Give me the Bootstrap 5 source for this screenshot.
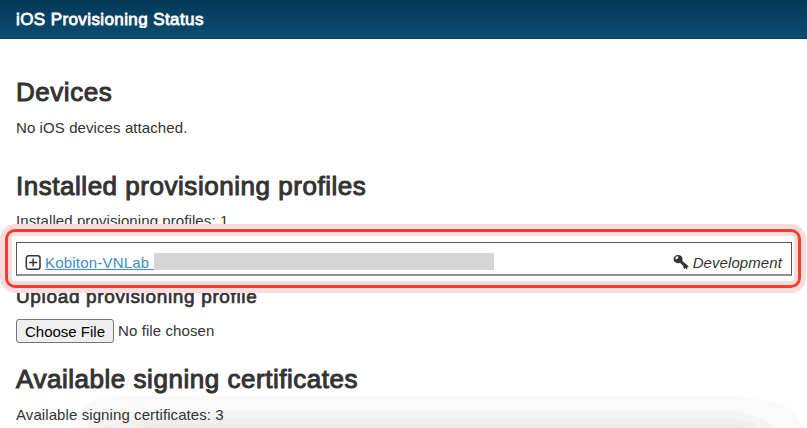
<!DOCTYPE html>
<html lang="en">
<head>
<meta charset="utf-8">
<meta name="viewport" content="width=device-width, initial-scale=1">
<title>iOS Provisioning Status</title>
<link href="https://cdn.jsdelivr.net/npm/bootstrap@5.3.0/dist/css/bootstrap.min.css" rel="stylesheet">
<style>
body{font-family:"Liberation Sans",Arial,sans-serif;font-size:15px;line-height:20px;letter-spacing:.09px;color:#333;background:#fff;height:428px}
.topbar{height:39px;padding-top:10px;background:linear-gradient(#053857,#0a4d72);border-bottom:1px solid #073753}
.topbar h1{font-size:17px;line-height:20px;height:18px;overflow:hidden;letter-spacing:.4px;color:#fff;-webkit-text-stroke:.8px #fff}
.section-title{font-size:26px;line-height:30px;height:30px;letter-spacing:.53px;font-weight:400;-webkit-text-stroke:1px #333;white-space:nowrap}
.sub-title{margin-top:-3px;font-size:19px;line-height:24px;letter-spacing:.65px;font-weight:400;-webkit-text-stroke:.7px #333}
.page{padding:38px 16px 0}
.devices-text{margin-top:11px}
.installed{margin-top:33px}
.count-text{margin-top:10px}
.highlight{z-index:2;height:59px;margin:-2px -10px 0 -11px;padding:10px 6px 0 8px;background:#fff;border:3px solid #f33d33;border-radius:10px;box-shadow:0 0 0 5px #fadcdc,inset 0 0 0 4px #fadcdc}
.profile{height:34px;padding:0 9px 0 8px;border:1px solid #555;border-bottom:2px solid #909090;background:#fff}
.plus{margin-top:12px}
.profile-link{margin:10px 0 0 4px;letter-spacing:.2px;color:#428bca}
.profile-link:hover{color:#2a6496}
.redacted{width:340px;height:17px;margin-top:10px;background:#d5d5d5}
.key{margin-top:11px}
.kind{margin:10px 0 0 4px}
.upload{margin-top:10px}
.choose{height:24px;padding:0 8px;border:1px solid #767676;border-radius:3px;background:#efefef;color:#000;font-size:15px;line-height:21px}
.file-status{margin:2px 0 0 4px}
.certs{margin-top:21px}
.cert-text{margin-top:11px}
.shade{left:70px;top:396px;z-index:-1}
</style>
</head>
<body class="overflow-hidden position-relative">
<header class="topbar d-flex align-items-start px-3">
<h1 class="mb-0 fw-normal">iOS Provisioning Status</h1>
</header>
<main class="page">
<section>
<h2 class="section-title mb-0">Devices</h2>
<p class="devices-text mb-0">No iOS devices attached.</p>
</section>
<section class="installed">
<h2 class="section-title mb-0">Installed provisioning profiles</h2>
<p class="count-text mb-0">Installed provisioning profiles: 1</p>
<div class="highlight position-relative">
<div class="profile d-flex align-items-start">
<svg class="plus flex-shrink-0" width="16" height="15" viewBox="0 0 16 15" fill="none" stroke="#333"><rect x="1.300" y=".8" width="13.700" height="13.400" rx="2.300" stroke-width="1.500"/><path d="M8.150 3.500v8M4.150 7.500h8" stroke-width="1.400"/></svg>
<a href="#" class="profile-link">Kobiton-VNLab&nbsp;</a>
<div class="redacted"></div>
<div class="ms-auto d-flex align-items-start">
<svg class="key" width="16" height="16" viewBox="0 0 16 16"><path fill="#333" fill-rule="evenodd" d="M5 1C2.600 1 .6 2.800.6 5.100S2.500 9.300 4.900 9.300c.8 0 1.500-.2 2.100-.6L10.500 12.300 10.300 13.700 11.500 14.900 12.400 13.900 12.900 14.300 13.300 15.500 14.400 14.400 14 13.300 15.300 13.200 15.500 12.200 9.100 6.700C9.400 6.200 9.500 5.600 9.500 5 9.500 2.600 7.400 1 5 1ZM3.100 2.800C3.800 2.100 4.700 2.100 5.100 2.500S5.400 3.800 4.700 4.500 3.100 5.300 2.700 4.900 2.400 3.500 3.100 2.800Z"/></svg>
<em class="kind">Development</em>
</div>
</div>
</div>
<h3 class="sub-title mb-0">Upload provisioning profile</h3>
<div class="upload d-flex">
<button class="choose" type="button">Choose File</button>
<span class="file-status">No file chosen</span>
</div>
</section>
<section class="certs">
<h2 class="section-title mb-0">Available signing certificates</h2>
<p class="cert-text mb-0">Available signing certificates: 3</p>
</section>
</main>
<svg class="shade position-absolute" width="735" height="32" viewBox="0 0 735 32"><path fill="#fafafa" d="M1 32V20L11 13C19 5 35 0 55 0H668Q705 3 723 14Q728 24 735 32Z"/><path fill="#f4f4f4" d="M13 32Q43 14 84 14H650Q688 16 706 32Z"/><path fill="#efefef" d="M32 32Q62 21 98 21H660Q680 24 692 32Z"/><path fill="#eaeaea" d="M66 32Q85 28 105 28H662Q672 29 679 32Z"/></svg>
<script src="https://cdn.jsdelivr.net/npm/bootstrap@5.3.0/dist/js/bootstrap.bundle.min.js"></script>
</body>
</html>
